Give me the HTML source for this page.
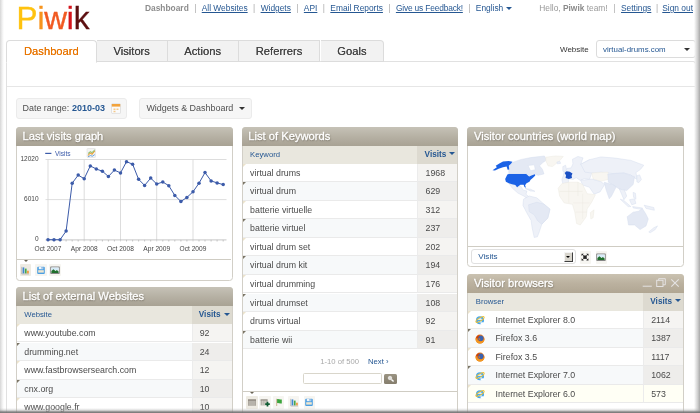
<!DOCTYPE html>
<html lang="en">
<head>
<meta charset="utf-8">
<title>Piwik - Dashboard</title>
<style>
*{box-sizing:border-box;margin:0;padding:0}
html,body{width:700px;height:413px;overflow:hidden;background:#fff}
body{font-family:"Liberation Sans",Arial,sans-serif;color:#444;position:relative;font-size:9px;will-change:transform}
.abs,.w,.wh,.th,.tv,.r,.rv,.foot,.ic{position:absolute}
a{color:#255792}
#logo{left:16.5px;top:-2.400px;font-size:31.5px;letter-spacing:-0.15px;line-height:40px;white-space:nowrap;-webkit-text-stroke:0.35px}
#topnav{left:145px;top:3px;font-size:8.4px;line-height:11px;white-space:nowrap;color:#888}
#topnav b{color:#8d8d8d}
#topnav .sep{color:#aaa;margin:0 5.4px}#topright .sep{color:#aaa;margin:0 5.6px}#topright .s2{margin:0 4.2px 0 4.6px}
#topright{right:7px;top:3px;font-size:8.4px;line-height:11px;white-space:nowrap;color:#999}
#topright b{color:#8a8a8a}
.caret{display:inline-block;width:0;height:0;border-left:3px solid transparent;border-right:3px solid transparent;border-top:3.5px solid #255792;vertical-align:middle;margin-left:3px;position:relative;top:-0.5px}
#panel{left:6px;top:61px;width:690px;height:360px;border:1px solid #e1e1e1;border-bottom:none;background:#fff;border-radius:0 3px 0 0}
#panelline{left:7px;top:86px;width:688px;height:1px;background:#e6e6e6}
.tab{top:40px;height:22px;border:1px solid #dcdcdc;border-left:none;background:#f2f2f2;font-size:11.2px;line-height:21px;text-align:center;color:#444;text-shadow:0 0 0.4px #444}
.tab.first{border-left:1px solid #dcdcdc;background:#fff;border-bottom-color:#fff;color:#e87500;border-radius:4px 4px 0 0;text-shadow:0 0 0.4px #e87500;height:23px}
.tab.last{border-radius:0 4px 0 0}
#sitelabel{left:560px;top:43.5px;font-size:8px;line-height:11px;color:#333}
#sitesel{left:596px;top:40px;width:100px;height:18px;border:1px solid #dcdcdc;border-radius:3px;background:#fff;font-size:7.9px;line-height:17px;color:#255792;padding-left:6px}
#sitesel i{position:absolute;right:5.5px;top:7px;width:0;height:0;border-left:3px solid transparent;border-right:3px solid transparent;border-top:3.5px solid #333}
.btn{top:98px;height:20.500px;border:1px solid #ebebeb;border-radius:3px;background:#f6f6f6;font-size:8.950px;line-height:18.500px;color:#505050;white-space:nowrap;padding-left:6px}
.btn b{color:#255792;font-size:9px;margin-left:0.300px}
.w{border:1px solid #d2cfc7;border-radius:3.5px;background:#fff}
.wh{height:18.5px;border-radius:3.5px 3.5px 0 0;background:linear-gradient(#c6c2b7,#b6b1a4 50%,#a8a294);color:#fff;font-size:11.2px;line-height:19.3px;padding-left:6.7px;-webkit-text-stroke:0.3px #fff;text-shadow:0.4px 0.8px 1.6px #6f695c;white-space:nowrap;overflow:hidden}
.th{height:18px;background:#e9e7de;color:#255792;font-size:7.7px;line-height:18.2px;padding-left:7.5px;white-space:nowrap}
.tv{height:18px;background:#dddad0;color:#255792;font-weight:bold;font-size:8.2px;line-height:18.2px;padding-left:7.3px;white-space:nowrap}
.tv i{display:inline-block;width:0;height:0;border-left:3.3px solid transparent;border-right:3.3px solid transparent;border-top:3.5px solid #255792;margin-left:3.2px;vertical-align:middle;position:relative;top:-0.5px}
.r{height:18.55px;font-size:8.8px;line-height:18.4px;color:#4a4a4a;padding-left:7.5px;border-bottom:1px solid #eaeaea;background:#fff;white-space:nowrap}
.r.o{background:#f7f9fa}
.rv{height:18.55px;font-size:8.8px;line-height:18.4px;color:#4a4a4a;padding-left:7.2px;border-bottom:1px solid #eaeaea;border-left:1px solid #ececec;background:#f5f4f2;white-space:nowrap}
.rv.o{background:#eeedeb}
.r:before{content:"";position:absolute;left:0;top:0;border-top:3.200px solid #ece3cc;border-right:3.200px solid transparent}
.r.o:before{border-top-color:#7a7465}
.foot{height:1px;background:#cfccc3}
.foot.t:before{content:"";position:absolute;left:7.100px;top:0.5px;border-top:2.900px solid #6a6456;border-left:2.400px solid transparent;border-right:2.400px solid transparent}
.ic svg{display:block}
.ic{width:11.5px;height:12.5px;border-radius:1px;background:#f6f5f1}
.ic.on{background:#eeebe3}
.ic svg{margin-left:-0.25px;margin-top:0.25px}
#shl{left:0;top:0;width:4px;height:413px;background:linear-gradient(90deg,#d6d6d6,#f0f0f0 55%,rgba(255,255,255,0))}
#shr{right:0;top:0;width:6px;height:413px;background:linear-gradient(270deg,#a8a8a8,#d0d0d0 40%,#efefef 80%,rgba(255,255,255,0))}
#shb{left:0;bottom:0;width:700px;height:5.5px;background:linear-gradient(0deg,#707070,rgba(125,125,125,0.8) 28%,rgba(175,175,175,0.4) 58%,rgba(200,200,200,0))}
</style>
</head>
<body>
<div id="logo" class="abs"><span style="color:#ffc20e">P</span><span style="color:#f7941e">i</span><span style="color:#f15a22">w</span><span style="color:#d4151c">i</span><span style="color:#5c0f10">k</span></div>
<div id="topnav" class="abs"><b>Dashboard</b><span class="sep">|</span><a href="#">All Websites</a><span class="sep">|</span><a href="#">Widgets</a><span class="sep">|</span><a href="#">API</a><span class="sep">|</span><a href="#">Email Reports</a><span class="sep">|</span><a href="#" style="letter-spacing:-0.17px">Give us Feedback!</a><span class="sep">|</span><span style="color:#255792">English</span><i class="caret"></i></div>
<div id="topright" class="abs">Hello, <b>Piwik</b> team!<span class="sep">|</span><a href="#">Settings</a><span class="sep s2">|</span><a href="#">Sign out</a></div>
<div id="panel" class="abs"></div><div id="panelline" class="abs"></div>
<div class="abs tab first" style="left:6px;width:90.800px">Dashboard</div>
<div class="abs tab" style="left:96.800px;width:70.800px">Visitors</div>
<div class="abs tab" style="left:167.600px;width:71.100px">Actions</div>
<div class="abs tab" style="left:238.700px;width:81.800px">Referrers</div>
<div class="abs tab last" style="left:320.500px;width:63.900px">Goals</div>
<div id="sitelabel" class="abs">Website</div><div id="sitesel" class="abs">virtual-drums.com<i></i></div>
<div class="abs btn" style="left:15.700px;width:111px;padding-left:5.800px">Date range: <b>2010-03</b><svg class="abs" style="left:94px;top:4px" width="10" height="11" viewBox="0 0 10 11"><rect x="0.5" y="0.8" width="9" height="9.6" rx="0.8" fill="#fbfbfb" stroke="#d2d2d2" stroke-width="0.6"/><rect x="0.8" y="1" width="8.4" height="2.6" fill="#f2a33c"/><path d="M2.5 5.5h2v1.5h-2zM5.5 5.500h2v1.500h-2zM2.500 7.800h2v1.400h-2z" fill="#f5c98a"/></svg></div>
<div class="abs btn" style="left:139px;width:113.400px;padding-left:6.400px">Widgets &amp; Dashboard <i class="caret" style="border-top-color:#333"></i></div>
<div class="w" style="left:15.8px;top:127px;width:217px;height:153.7px"></div>
<div class="wh" style="left:15.8px;top:127px;width:217px">Last visits graph</div>
<svg class="abs" style="left:16px;top:146px" width="217" height="114" viewBox="16 146 217 114">
<g stroke="#d4d4d4" stroke-width="0.8" fill="none">
<path d="M48.0 159.5V241.5"/>
<path d="M84.2 159.5V241.5"/>
<path d="M120.5 159.5V241.5"/>
<path d="M156.7 159.5V241.5"/>
<path d="M193.0 159.5V241.5"/>
<path d="M45.5 159.5H226.5"/>
<path d="M45.5 199.6H226.5"/>
</g>
<g stroke="#b9b9b9" stroke-width="0.8" fill="none"><path d="M45.5 239.9H226.5"/>
<path d="M54.0 239.9v1.6M60.1 239.9v1.6M66.1 239.9v1.6M72.2 239.9v1.6M78.2 239.9v1.6M90.3 239.9v1.6M96.3 239.9v1.6M102.4 239.9v1.6M108.4 239.9v1.6M114.4 239.9v1.6M126.5 239.9v1.6M132.6 239.9v1.6M138.6 239.9v1.6M144.6 239.9v1.6M150.7 239.9v1.6M162.8 239.9v1.6M168.8 239.9v1.6M174.8 239.9v1.6M180.9 239.9v1.6M186.9 239.9v1.6M199.0 239.9v1.6M205.0 239.9v1.6M211.1 239.9v1.6M217.1 239.9v1.6M223.2 239.9v1.6"/></g>
<polyline points="48.0,239.7 54.0,239.7 60.1,239.7 66.1,231.1 72.2,183.2 78.2,175.1 84.2,178.7 90.3,165.9 96.3,169.0 102.4,171.2 108.4,176.5 114.4,170.1 120.5,172.9 126.5,161.7 132.6,164.2 138.6,179.3 144.6,185.4 150.7,178.1 156.7,184.0 162.8,182.0 168.8,185.7 174.8,195.4 180.9,201.5 186.9,197.4 193.0,191.8 199.0,183.2 205.0,172.6 211.1,180.9 217.1,182.9 223.2,184.6" fill="none" stroke="#3c5ba9" stroke-width="1"/>
<g fill="#3c5ba9"><circle cx="48.0" cy="239.7" r="1.75"/><circle cx="54.0" cy="239.7" r="1.75"/><circle cx="60.1" cy="239.7" r="1.75"/><circle cx="66.1" cy="231.1" r="1.75"/><circle cx="72.2" cy="183.2" r="1.75"/><circle cx="78.2" cy="175.1" r="1.75"/><circle cx="84.2" cy="178.7" r="1.75"/><circle cx="90.3" cy="165.9" r="1.75"/><circle cx="96.3" cy="169.0" r="1.75"/><circle cx="102.4" cy="171.2" r="1.75"/><circle cx="108.4" cy="176.5" r="1.75"/><circle cx="114.4" cy="170.1" r="1.75"/><circle cx="120.5" cy="172.9" r="1.75"/><circle cx="126.5" cy="161.7" r="1.75"/><circle cx="132.6" cy="164.2" r="1.75"/><circle cx="138.6" cy="179.3" r="1.75"/><circle cx="144.6" cy="185.4" r="1.75"/><circle cx="150.7" cy="178.1" r="1.75"/><circle cx="156.7" cy="184.0" r="1.75"/><circle cx="162.8" cy="182.0" r="1.75"/><circle cx="168.8" cy="185.7" r="1.75"/><circle cx="174.8" cy="195.4" r="1.75"/><circle cx="180.9" cy="201.5" r="1.75"/><circle cx="186.9" cy="197.4" r="1.75"/><circle cx="193.0" cy="191.8" r="1.75"/><circle cx="199.0" cy="183.2" r="1.75"/><circle cx="205.0" cy="172.6" r="1.75"/><circle cx="211.1" cy="180.9" r="1.75"/><circle cx="217.1" cy="182.9" r="1.75"/><circle cx="223.2" cy="184.6" r="1.75"/></g>
<g font-family="Liberation Sans,Arial,sans-serif" font-size="6.5" fill="#444">
<text x="38.5" y="160.6" text-anchor="end">12020</text><text x="38.5" y="201.2" text-anchor="end">6010</text><text x="38.5" y="241.3" text-anchor="end">0</text>
<text x="48.0" y="251" text-anchor="middle" font-size="6.6">Oct 2007</text>
<text x="84.2" y="251" text-anchor="middle" font-size="6.6">Apr 2008</text>
<text x="120.5" y="251" text-anchor="middle" font-size="6.6">Oct 2008</text>
<text x="156.7" y="251" text-anchor="middle" font-size="6.6">Apr 2009</text>
<text x="193.0" y="251" text-anchor="middle" font-size="6.6">Oct 2009</text>
<text x="55" y="155.7" fill="#3c5ba9" font-size="6.6">Visits</text></g>
<path d="M45.2 153.4H51.4" stroke="#3c5ba9" stroke-width="1.2"/>
<g><rect x="87" y="148.5" width="8.5" height="9" rx="0.8" fill="#f4f4f4" stroke="#d8d8d8" stroke-width="0.5"/><path d="M88 155.5l2.2-2.5 1.8 1.2 2.8-3.4" stroke="#e7a23a" stroke-width="1.1" fill="none"/><path d="M88 153.5l2.2-1.8 1.8 0.8 2.8-2.6" stroke="#6cb24a" stroke-width="0.9" fill="none"/><path d="M88 156.8l2.4-1.2 2 0.6 2.4-1.6" stroke="#5b9bd8" stroke-width="0.9" fill="none"/></g>
</svg>
<div class="foot t" style="left:16.8px;top:259.2px;width:214.6px"></div>
<div class="ic on" style="left:19.7px;top:263.8px"><svg viewBox="0 0 12 12" width="12" height="12"><path d="M2.700 2.800V10H10" stroke="#a9a9a9" stroke-width="0.7" fill="none"/><rect x="3.600" y="3.400" width="1.700" height="6" fill="#3f86d0"/><rect x="5.900" y="4.600" width="1.700" height="4.800" fill="#4aa84a"/><rect x="8.200" y="6.700" width="1.500" height="2.700" fill="#ef8a24"/></svg></div>
<div class="ic" style="left:35.2px;top:263.8px"><svg viewBox="0 0 12 12" width="12" height="12"><rect x="2.200" y="2.800" width="7.600" height="7.200" rx="0.9" fill="#4c9fe2"/><rect x="3.800" y="2.800" width="4.400" height="2.400" fill="#eef5fc"/><rect x="6.600" y="3" width="0.900" height="1.700" fill="#3b7fc4"/><rect x="3.200" y="6.200" width="5.600" height="2.400" fill="#efe6cf"/></svg></div>
<div class="ic" style="left:49px;top:263.8px"><svg viewBox="0 0 12 12" width="12" height="12"><rect x="1.800" y="3" width="8.400" height="6.600" fill="#fff" stroke="#555" stroke-width="0.7"/><rect x="2.400" y="3.600" width="7.200" height="2.800" fill="#d6ebf9"/><path d="M2.400 9V7l2-1.800 2.200 1.800 1.300-0.900 1.700 1.300V9z" fill="#1f6e2d"/></svg></div>
<div class="w" style="left:15.8px;top:287.3px;width:217px;height:140px"></div>
<div class="wh" style="left:15.8px;top:287.3px;width:217px">List of external Websites</div>
<div class="th" style="left:16.8px;top:305.8px;width:215px">Website</div>
<div class="tv" style="left:191.5px;top:305.8px;width:40.3px">Visits<i></i></div>
<div class="r" style="left:16.8px;top:323.95px;width:215px">www.youtube.com</div>
<div class="rv" style="left:191.5px;top:323.95px;width:40.3px">92</div>
<div class="r o" style="left:16.8px;top:342.5px;width:215px">drumming.net</div>
<div class="rv o" style="left:191.5px;top:342.5px;width:40.3px">24</div>
<div class="r" style="left:16.8px;top:361.05px;width:215px">www.fastbrowsersearch.com</div>
<div class="rv" style="left:191.5px;top:361.05px;width:40.3px">12</div>
<div class="r o" style="left:16.8px;top:379.6px;width:215px">cnx.org</div>
<div class="rv o" style="left:191.5px;top:379.6px;width:40.3px">10</div>
<div class="r" style="left:16.8px;top:398.15px;width:215px">www.google.fr</div>
<div class="rv" style="left:191.5px;top:398.15px;width:40.3px">10</div>
<div class="w" style="left:241.6px;top:127px;width:216.6px;height:300px"></div>
<div class="wh" style="left:241.6px;top:127px;width:216.6px">List of Keywords</div>
<div class="th" style="left:242.6px;top:145.5px;width:214.6px">Keyword</div>
<div class="tv" style="left:417.3px;top:145.5px;width:39.9px">Visits<i></i></div>
<div class="r" style="left:242.6px;top:163.65px;width:214.6px">virtual drums</div>
<div class="rv" style="left:417.3px;top:163.65px;width:39.9px">1968</div>
<div class="r o" style="left:242.6px;top:182.2px;width:214.6px">virtual drum</div>
<div class="rv o" style="left:417.3px;top:182.2px;width:39.9px">629</div>
<div class="r" style="left:242.6px;top:200.75px;width:214.6px">batterie virtuelle</div>
<div class="rv" style="left:417.3px;top:200.75px;width:39.9px">312</div>
<div class="r o" style="left:242.6px;top:219.3px;width:214.6px">batterie virtuel</div>
<div class="rv o" style="left:417.3px;top:219.3px;width:39.9px">237</div>
<div class="r" style="left:242.6px;top:237.85px;width:214.6px">virtual drum set</div>
<div class="rv" style="left:417.3px;top:237.85px;width:39.9px">202</div>
<div class="r o" style="left:242.6px;top:256.4px;width:214.6px">virtual drum kit</div>
<div class="rv o" style="left:417.3px;top:256.4px;width:39.9px">194</div>
<div class="r" style="left:242.6px;top:274.95px;width:214.6px">virtual drumming</div>
<div class="rv" style="left:417.3px;top:274.95px;width:39.9px">176</div>
<div class="r o" style="left:242.6px;top:293.5px;width:214.6px">virtual drumset</div>
<div class="rv o" style="left:417.3px;top:293.5px;width:39.9px">108</div>
<div class="r" style="left:242.6px;top:312.05px;width:214.6px">drums virtual</div>
<div class="rv" style="left:417.3px;top:312.05px;width:39.9px">92</div>
<div class="r o" style="left:242.6px;top:330.6px;width:214.6px">batterie wii</div>
<div class="rv o" style="left:417.3px;top:330.6px;width:39.9px">91</div>
<div class="abs" style="left:320.200px;top:356px;font-size:7.700px;line-height:12px;color:#a9a9a9;white-space:nowrap">1-10 of 500</div>
<div class="abs" style="left:368px;top:356px;font-size:7.700px;line-height:12px;color:#255792;white-space:nowrap">Next ›</div>
<div class="abs" style="left:303.3px;top:373px;width:78.6px;height:11.3px;border:1px solid #d9d6cb;border-radius:1.5px;background:#fff"></div>
<div class="abs" style="left:384px;top:373.5px;width:13.4px;height:10.4px;border-radius:1.5px;background:linear-gradient(#9a9382,#857e6d)"><svg class="abs" style="left:3px;top:1.5px" viewBox="0 0 8 8" width="7.5" height="7.5"><circle cx="3.2" cy="3.2" r="1.9" fill="#fff" stroke="#fff" stroke-width="0.6" fill-opacity="0.75"/><path d="M4.7 4.700L7 7" stroke="#fff" stroke-width="1.5"/></svg></div>
<div class="foot t" style="left:242.6px;top:391.200px;width:214.6px"></div>
<div class="ic on" style="left:246px;top:396px"><svg viewBox="0 0 12 12" width="12" height="12"><rect x="2" y="3" width="8" height="6.8" fill="#aca79e"/><path d="M2 4.400H10" stroke="#8c877d" stroke-width="0.8"/><path d="M4 4.800V9.800M6 4.800V9.800M8 4.800V9.800" stroke="#d4d1ca" stroke-width="0.6"/></svg></div>
<div class="ic" style="left:259.4px;top:396px"><svg viewBox="0 0 12 12" width="12" height="12"><rect x="1.6" y="3" width="7" height="6.400" fill="#b5b1a9"/><path d="M1.6 4.300H8.600" stroke="#908b82" stroke-width="0.7"/><path d="M3.400 4.600V9.400M5.100 4.600V9.400M6.800 4.600V9.400" stroke="#e2e0da" stroke-width="0.6"/><path d="M8.500 5.800V10.400M6.200 8.100H10.800" stroke="#0e5c33" stroke-width="1.700"/></svg></div>
<div class="ic" style="left:272.9px;top:396px"><svg viewBox="0 0 12 12" width="12" height="12"><path d="M3.700 2.800V10" stroke="#c2a07c" stroke-width="0.8"/><path d="M4.100 3.200C5.400 2.600 6.600 4 8.800 3.400V7.400C6.600 8 5.400 6.600 4.100 7.200z" fill="#3ba43c"/></svg></div>
<div class="ic" style="left:287.9px;top:396px"><svg viewBox="0 0 12 12" width="12" height="12"><path d="M2.700 2.800V10H10" stroke="#a9a9a9" stroke-width="0.7" fill="none"/><rect x="3.600" y="3.400" width="1.700" height="6" fill="#3f86d0"/><rect x="5.900" y="4.600" width="1.700" height="4.800" fill="#4aa84a"/><rect x="8.200" y="6.700" width="1.500" height="2.700" fill="#ef8a24"/></svg></div>
<div class="ic" style="left:303.7px;top:396px"><svg viewBox="0 0 12 12" width="12" height="12"><rect x="2.200" y="2.800" width="7.600" height="7.200" rx="0.9" fill="#4c9fe2"/><rect x="3.800" y="2.800" width="4.400" height="2.400" fill="#eef5fc"/><rect x="6.600" y="3" width="0.900" height="1.700" fill="#3b7fc4"/><rect x="3.200" y="6.200" width="5.600" height="2.400" fill="#efe6cf"/></svg></div>
<div class="w" style="left:467.3px;top:127px;width:216.6px;height:140px"></div>
<div class="wh" style="left:467.3px;top:127px;width:216.6px">Visitor countries (world map)</div>
<svg class="abs" style="left:467px;top:145px" width="220" height="123" viewBox="0 0 700 391">
<g stroke="#d5dcee" stroke-width="1.5" stroke-linejoin="round">
<path fill="#e4e9f4" d="M133.0 68.5 144.5 55.6 170.0 46.4 202.3 39.9 246.3 34.8 253.2 47.7 239.3 57.0 231.0 66.2 240.3 77.8 244.9 91.7 226.4 96.3 217.2 92.6 202.3 99.1 189.4 91.7 133.0 91.7z"/>
<path fill="#fff" d="M194.0 64.9 214.4 63.0 217.2 78.7 202.3 81.5z"/>
<path fill="#f8f6f1" stroke="#ece9e1" d="M250.9 38.5 281.0 34.8 306.4 36.2 294.9 50.0 271.7 68.5 257.9 66.2 250.9 50.0z"/>
<path fill="#eef1f8" d="M285.9 53.9 296.1 52.5 297.6 58.3 287.3 59.8z"/>
<path fill="#eef1f8" d="M133.0 121.7 143.2 125.0 153.8 126.8 159.3 134.2 170.0 129.6 179.2 143.5 190.8 146.2 187.6 156.4 202.3 169.4 198.7 174.9 180.2 162.0 161.7 152.7 145.0 137.9z"/>
<path fill="#eef1f8" d="M184.8 137.9 202.3 140.7 216.2 147.2 202.3 146.2z"/>
<path fill="#eef1f8" d="M180.0 172.0 198.0 162.0 222.0 168.0 245.0 188.0 264.0 204.0 257.0 232.0 238.0 252.0 230.0 276.0 224.0 292.0 214.0 294.0 207.0 262.0 204.0 240.0 190.0 215.0 178.0 192.0z"/>
<path fill="#e4e9f4" d="M196.0 190.0 222.0 182.0 245.0 188.0 264.0 204.0 257.0 232.0 238.0 252.0 224.0 240.0 214.0 222.0 198.0 212.0z"/>
<path fill="#eef1f8" d="M301.9 109.5 306.3 97.8 309.3 83.2 318.0 74.4 331.2 72.9 337.0 59.8 335.6 45.2 353.1 36.4 369.2 40.8 361.9 61.2 389.7 46.6 397.0 89.0 389.7 109.5 373.6 106.6 360.5 112.4 347.3 103.7 337.0 109.5 323.9 106.6 322.4 119.8 304.9 122.7z"/>
<path fill="#eef1f8" d="M304.9 68.6 313.6 64.2 316.6 77.3 312.2 86.1 304.9 83.2z"/>
<path fill="#eef1f8" d="M361.9 61.2 389.7 46.6 426.3 37.8 471.6 41.5 521.4 48.8 562.3 64.2 552.1 77.3 537.5 87.6 541.8 109.5 528.7 102.2 521.4 94.9 499.4 89.0 462.9 90.5 426.3 86.1 397.0 89.0 375.1 86.1z"/>
<path fill="#f8f6f1" stroke="#ece9e1" d="M397.0 89.0 448.2 86.1 452.6 108.1 426.3 115.4 401.4 108.1z"/>
<path fill="#eef1f8" d="M361.9 112.4 397.0 108.1 426.3 116.8 438.0 125.6 423.4 149.0 404.3 156.3 389.7 134.4 367.8 127.1z"/>
<path fill="#e4e9f4" d="M448.2 92.0 499.4 89.0 533.1 100.7 528.7 125.6 508.2 144.6 484.8 140.2 462.9 125.6 449.7 118.3z"/>
<path fill="#e4e9f4" d="M436.5 118.3 462.9 125.6 474.6 132.9 459.9 162.2 452.6 171.0 442.4 141.7z"/>
<path fill="#eef1f8" d="M484.8 140.2 500.9 143.2 508.2 162.2 499.4 173.9 492.1 156.3z"/>
<path fill="#eef1f8" d="M487.7 172.4 498.0 175.3 521.4 195.8 512.6 195.8z"/>
<path fill="#eef1f8" d="M517.0 173.9 533.1 171.0 537.5 185.6 524.3 190.0z"/>
<path fill="#eef1f8" d="M527.2 195.8 557.9 200.2 556.5 204.6 528.7 200.2z"/>
<path fill="#eef1f8" d="M563.8 191.4 594.5 198.8 596.0 207.5 569.6 201.7z"/>
<path fill="#eef1f8" d="M528.7 150.5 536.0 153.4 537.5 172.4 530.1 166.6z"/>
<path fill="#eef1f8" d="M540.4 97.8 549.2 94.9 555.0 109.5 546.2 119.8 540.4 116.8z"/>
<path fill="#e4e9f4" d="M509.7 228.0 528.7 213.4 546.2 210.5 557.9 201.7 568.2 217.8 576.9 235.3 569.6 257.3 550.6 269.0 533.1 254.3 514.0 254.3z"/>
<path fill="#eef1f8" d="M578.4 276.3 594.5 263.1 606.2 257.3 598.9 269.0 582.8 279.2z"/>
<path fill="#f8f6f1" stroke="#ece9e1" d="M290.2 137.3 301.9 122.7 323.9 118.3 353.1 118.3 367.8 125.6 382.4 154.9 408.7 157.8 397.0 181.2 382.4 203.1 379.5 228.0 360.5 254.3 348.8 249.9 342.9 213.4 335.6 188.5 309.3 184.1 294.6 162.2z"/>
<path fill="none" stroke="#ece9e1" d="M294.6 147.6L367.8 147.6M323.9 118.3L323.9 184.1M353.1 118.3L353.1 162.2M338.5 184.1L389.7 184.1M345.8 213.4L380.9 213.4M367.8 154.9L367.8 235.3"/>
<path fill="#f8f6f1" stroke="#ece9e1" d="M392.6 214.8 404.3 206.1 401.4 230.9 394.1 235.3z"/>
</g>
<path fill="#1b62e6" d="M121.4 107.9L128.4 94 133 91.7 188.5 91.7 197.7 100 207 96.3 216.2 92.6 217.2 97.2 209.3 104.6 202.4 110.2 198.7 117.1 189.4 121.7 184.8 127.7 187.6 136 182.9 133.3 180.2 126.4 170 126.4 159.3 134.2 153.8 126.8 143.2 125 133 121.7 123.7 117.1z"/>
<path fill="#1b62e6" d="M81.2 80.1L95 70.4 91.4 66.2 102.9 58.4 114.5 52.4 133 51 144.5 52.8 139.9 59.3 133 66.2 134.4 77.8 129.3 78.7 126 68.6 114.5 70.9 100.6 75.5 89 80.6z"/>
<path fill="#1a50c4" d="M310.7 89.0 316.6 83.2 326.8 84.7 335.6 90.5 332.7 97.8 334.1 105.1 323.9 108.1 313.6 105.1 315.1 96.4z"/>
</svg>
<div class="foot" style="left:468.3px;top:246px;width:214.6px"></div>
<div class="abs" style="left:470.7px;top:249.1px;width:105.6px;height:15.4px;border:1px solid #e0e0e0;border-radius:3px;background:#fff;font-size:8.1px;line-height:14.2px;color:#255792;padding-left:6.6px">Visits</div>
<div class="abs" style="left:563.7px;top:251.9px;width:9.2px;height:10.5px;background:#d8d5cd;border:1px solid;border-color:#f4f4f4 #404040 #404040 #f4f4f4"><i style="position:absolute;left:1.3px;top:3px;border-left:2.3px solid transparent;border-right:2.3px solid transparent;border-top:2.8px solid #000"></i></div>
<div class="ic" style="left:579.5px;top:251px"><svg viewBox="-1 -1.200 14 14" width="12" height="12"><rect x="4" y="4" width="4" height="4" fill="#222"/><path d="M2 2h2.6L2 4.6zM10 2v2.6L7.4 2zM2 10V7.4L4.6 10zM10 10H7.4L10 7.4z" fill="#222"/><path d="M2.6 2.6L4.4 4.400M9.4 2.6L7.6 4.4M2.6 9.4L4.4 7.6M9.4 9.4L7.6 7.6" stroke="#222" stroke-width="1"/></svg></div>
<div class="ic" style="left:595.6px;top:251px"><svg viewBox="0 0 12 12" width="12" height="12"><rect x="1.800" y="3" width="8.400" height="6.600" fill="#fff" stroke="#555" stroke-width="0.7"/><rect x="2.400" y="3.600" width="7.200" height="2.800" fill="#d6ebf9"/><path d="M2.400 9V7l2-1.800 2.200 1.800 1.300-0.900 1.700 1.300V9z" fill="#1f6e2d"/></svg></div>
<div class="w" style="left:467.3px;top:274px;width:216.6px;height:150px"></div>
<div class="wh" style="left:467.3px;top:274px;width:216.6px;background:linear-gradient(#cac2b1,#bbb19f 50%,#b0a693)">Visitor browsers</div>
<svg class="abs" style="left:640px;top:276px" width="42" height="14" viewBox="640 276 42 14" fill="none" stroke="#e4e2e2" stroke-width="1"><path d="M642.700 286.200H651.800"/><rect x="656.700" y="280.300" width="6.300" height="6.200"/><path d="M658.700 280.300V278.700H665.300V284.800H663"/><path d="M671.300 279.300l7.400 7.400M678.700 279.300l-7.400 7.400" stroke-width="1.100"/></svg>
<div class="th" style="left:468.3px;top:292.5px;width:214.6px">Browser</div>
<div class="tv" style="left:643px;top:292.5px;width:39.9px">Visits<i></i></div>
<div class="r" style="left:468.3px;top:310.65px;width:214.6px;padding-left:27.2px">Internet Explorer 8.0</div>
<div class="rv" style="left:643px;top:310.65px;width:39.9px">2114</div>
<div class="r o" style="left:468.3px;top:329.2px;width:214.6px;padding-left:27.2px">Firefox 3.6</div>
<div class="rv o" style="left:643px;top:329.2px;width:39.9px">1387</div>
<div class="r" style="left:468.3px;top:347.75px;width:214.6px;padding-left:27.2px">Firefox 3.5</div>
<div class="rv" style="left:643px;top:347.75px;width:39.9px">1117</div>
<div class="r o" style="left:468.3px;top:366.3px;width:214.6px;padding-left:27.2px">Internet Explorer 7.0</div>
<div class="rv o" style="left:643px;top:366.3px;width:39.9px">1062</div>
<div class="r" style="left:468.3px;top:384.85px;width:214.6px;padding-left:27.2px;background:#fffff5">Internet Explorer 6.0</div>
<div class="rv" style="left:643px;top:384.85px;width:39.9px;background:#fffff5">573</div>
<div class="abs" style="left:475.200px;top:314.95px"><svg viewBox="0 0 10 10" width="10" height="10"><circle cx="5" cy="5.300" r="3.100" fill="#fff" stroke="#4aa8ec" stroke-width="1.900"/><path d="M2 5.500H8.300" stroke="#4aa8ec" stroke-width="1.400"/><path d="M5.600 7.300h3.200v1.800h-3.200z" fill="#fff"/><ellipse cx="5" cy="4.500" rx="4.800" ry="1.500" transform="rotate(-32 5 4.500)" fill="none" stroke="#f1c02f" stroke-width="0.900"/></svg></div>
<div class="abs" style="left:475.200px;top:333.5px"><svg viewBox="0 0 10 10" width="10" height="10"><circle cx="5" cy="5.100" r="4.500" fill="#e8761c"/><circle cx="5.700" cy="4.300" r="2.800" fill="#3a63b0"/><path d="M0.800 3.800C1.800 6.600 4 8 6.600 7.400 8.200 7 9.100 5.600 9.300 4 10 6.700 8.200 9.600 5 9.600 2 9.600 0 6.900 0.800 3.800z" fill="#f29a22"/><path d="M1.100 3.400C2.100 1.400 3.800 0.900 5 1.500 4 1.800 3.200 2.800 3.600 4.100 3 4.600 1.800 4.400 1.100 3.400z" fill="#c8430f"/><path d="M3.600 4.100C4.600 4.400 5.400 5 5.200 6 4.200 6.200 3.400 5.400 3.600 4.100z" fill="#e8761c"/></svg></div>
<div class="abs" style="left:475.200px;top:352.05px"><svg viewBox="0 0 10 10" width="10" height="10"><circle cx="5" cy="5.100" r="4.500" fill="#e8761c"/><circle cx="5.700" cy="4.300" r="2.800" fill="#3a63b0"/><path d="M0.800 3.800C1.800 6.600 4 8 6.600 7.400 8.200 7 9.100 5.600 9.300 4 10 6.700 8.200 9.600 5 9.600 2 9.600 0 6.900 0.800 3.800z" fill="#f29a22"/><path d="M1.100 3.400C2.100 1.400 3.800 0.900 5 1.500 4 1.800 3.200 2.800 3.600 4.100 3 4.600 1.800 4.400 1.100 3.400z" fill="#c8430f"/><path d="M3.600 4.100C4.600 4.400 5.400 5 5.200 6 4.200 6.200 3.400 5.400 3.600 4.100z" fill="#e8761c"/></svg></div>
<div class="abs" style="left:475.200px;top:370.6px"><svg viewBox="0 0 10 10" width="10" height="10"><circle cx="5" cy="5.300" r="3.100" fill="#fff" stroke="#4aa8ec" stroke-width="1.900"/><path d="M2 5.500H8.300" stroke="#4aa8ec" stroke-width="1.400"/><path d="M5.600 7.300h3.200v1.800h-3.200z" fill="#fff"/><ellipse cx="5" cy="4.500" rx="4.800" ry="1.500" transform="rotate(-32 5 4.500)" fill="none" stroke="#f1c02f" stroke-width="0.900"/></svg></div>
<div class="abs" style="left:475.200px;top:389.15px"><svg viewBox="0 0 10 10" width="10" height="10"><circle cx="5" cy="5.300" r="3.100" fill="#fff" stroke="#4aa8ec" stroke-width="1.900"/><path d="M2 5.500H8.300" stroke="#4aa8ec" stroke-width="1.400"/><path d="M5.600 7.300h3.200v1.800h-3.200z" fill="#fff"/><ellipse cx="5" cy="4.500" rx="4.800" ry="1.500" transform="rotate(-32 5 4.500)" fill="none" stroke="#f1c02f" stroke-width="0.900"/></svg></div>
<div id="shl" class="abs"></div><div id="shr" class="abs"></div><div id="shb" class="abs"></div>
</body>
</html>
